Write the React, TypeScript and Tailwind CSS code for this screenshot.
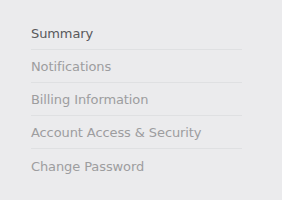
const items = [
  { label: 'Summary', active: true },
  { label: 'Notifications' },
  { label: 'Billing Information' },
  { label: 'Account Access & Security' },
  { label: 'Change Password' },
];

export default function App() {
  return (
    <div className="min-h-[200px] w-[282px] bg-[#ebebed] pt-[17px] pl-[31px]" style={{ fontFamily: '"DejaVu Sans", sans-serif' }}>
      <ul className="w-[211px]">
        {items.map((item, i) => (
          <li
            key={item.label}
            className={`flex h-[33px] items-center pt-[2px] text-[13px] tracking-[-0.1px] ${
              i < items.length - 1 ? 'border-b border-[#dfe0e2]' : ''
            } ${item.active ? 'text-[#58585b]' : 'text-[#9d9d9f]'}`}
          >
            {item.label}
          </li>
        ))}
      </ul>
    </div>
  );
}
